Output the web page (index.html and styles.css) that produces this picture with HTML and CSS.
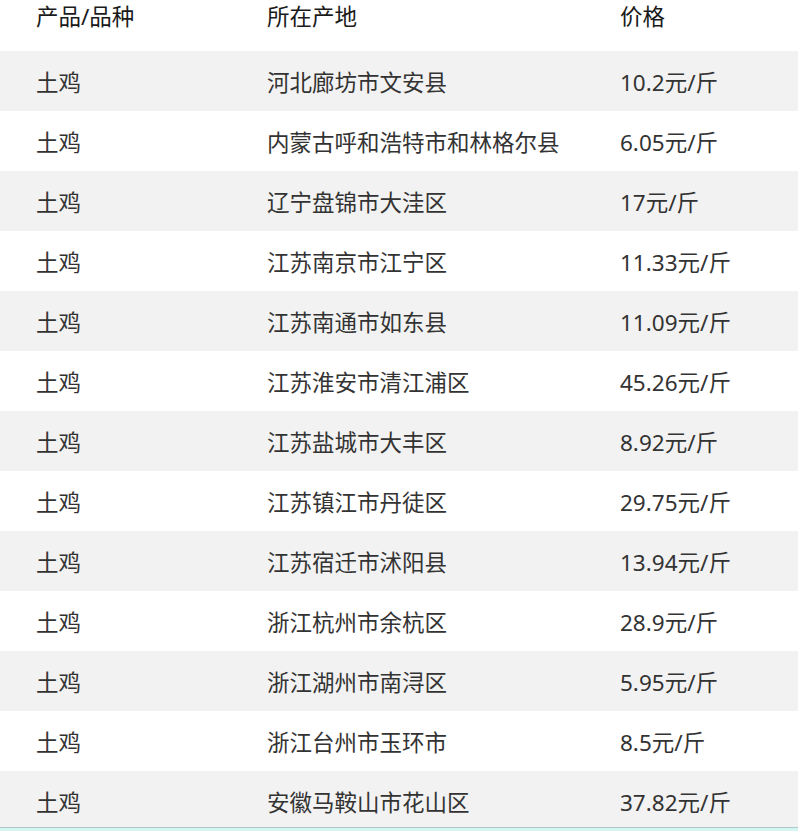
FILE: index.html
```html
<!DOCTYPE html>
<html lang="zh-CN">
<head>
<meta charset="utf-8">
<title>土鸡价格</title>
<link rel="stylesheet" href="styles.css">
</head>
<body>
<div class="table">
  <div class="row head">
    <div class="cell">产品/品种</div>
    <div class="cell">所在产地</div>
    <div class="cell">价格</div>
  </div>
  <div class="row odd"><div class="cell">土鸡</div><div class="cell">河北廊坊市文安县</div><div class="cell">10.2元/斤</div></div>
  <div class="row"><div class="cell">土鸡</div><div class="cell">内蒙古呼和浩特市和林格尔县</div><div class="cell">6.05元/斤</div></div>
  <div class="row odd"><div class="cell">土鸡</div><div class="cell">辽宁盘锦市大洼区</div><div class="cell">17元/斤</div></div>
  <div class="row"><div class="cell">土鸡</div><div class="cell">江苏南京市江宁区</div><div class="cell">11.33元/斤</div></div>
  <div class="row odd"><div class="cell">土鸡</div><div class="cell">江苏南通市如东县</div><div class="cell">11.09元/斤</div></div>
  <div class="row"><div class="cell">土鸡</div><div class="cell">江苏淮安市清江浦区</div><div class="cell">45.26元/斤</div></div>
  <div class="row odd"><div class="cell">土鸡</div><div class="cell">江苏盐城市大丰区</div><div class="cell">8.92元/斤</div></div>
  <div class="row"><div class="cell">土鸡</div><div class="cell">江苏镇江市丹徒区</div><div class="cell">29.75元/斤</div></div>
  <div class="row odd"><div class="cell">土鸡</div><div class="cell">江苏宿迁市沭阳县</div><div class="cell">13.94元/斤</div></div>
  <div class="row"><div class="cell">土鸡</div><div class="cell">浙江杭州市余杭区</div><div class="cell">28.9元/斤</div></div>
  <div class="row odd"><div class="cell">土鸡</div><div class="cell">浙江湖州市南浔区</div><div class="cell">5.95元/斤</div></div>
  <div class="row"><div class="cell">土鸡</div><div class="cell">浙江台州市玉环市</div><div class="cell">8.5元/斤</div></div>
  <div class="row odd last"><div class="cell">土鸡</div><div class="cell">安徽马鞍山市花山区</div><div class="cell">37.82元/斤</div></div>
</div>
<div class="footer-strip"></div>
</body>
</html>
```
FILE: styles.css
```css
html, body {
  margin: 0;
  padding: 0;
  background: #ffffff;
}
body {
  font-family: "Noto Sans", "Noto Sans CJK SC", sans-serif;
  font-size: 22.5px;
  color: #333333;
  overflow: hidden;
}
.table {
  width: 798px;
}
.row {
  display: grid;
  grid-template-columns: 231px 353px 1fr;
  height: 60px;
  align-items: start;
}
.row.odd {
  background: #f2f2f2;
}
.row.head {
  height: 51px;
  color: #1a1a1a;
}
.row.head .cell {
  line-height: 34px;
  padding-top: 0;
}
.row.last {
  height: 56px;
}
.cell {
  padding-left: 36px;
  white-space: nowrap;
  line-height: 60px;
  padding-top: 2px;
}
.footer-strip {
  border-top: 1px solid #adc9c5;
  background: #d3f6f3;
  height: 20px;
}
```
